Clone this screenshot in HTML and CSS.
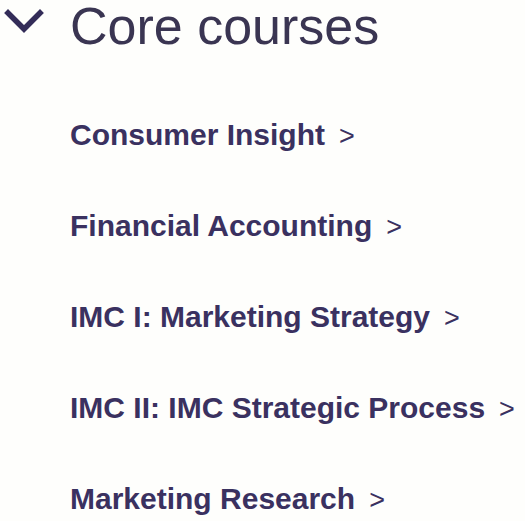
FILE: index.html
```html
<!DOCTYPE html>
<html>
<head>
<meta charset="utf-8">
<link rel="stylesheet" href="styles.css">
</head>
<body>
<div class="section">
  <div class="section-head">
    <svg class="toggle" width="48" height="40" viewBox="0 0 48 40">
      <path d="M8 13 L24 29 L40 13" fill="none" stroke="#332c58" stroke-width="5.5" stroke-linecap="square" stroke-linejoin="miter"/>
    </svg>
    <h2 class="title">Core courses</h2>
  </div>
  <ul class="courses">
    <li class="course-item"><a class="course">Consumer Insight<span class="arrow">&gt;</span></a></li>
    <li class="course-item"><a class="course">Financial Accounting<span class="arrow">&gt;</span></a></li>
    <li class="course-item"><a class="course">IMC I: Marketing Strategy<span class="arrow">&gt;</span></a></li>
    <li class="course-item"><a class="course">IMC II: IMC Strategic Process<span class="arrow">&gt;</span></a></li>
    <li class="course-item"><a class="course">Marketing Research<span class="arrow">&gt;</span></a></li>
  </ul>
</div>
</body>
</html>
```
FILE: styles.css
```css
html, body {
  margin: 0;
  padding: 0;
  background: #fefefc;
}
body {
  font-family: "Liberation Sans", Arial, sans-serif;
  color: #38305a;
}
.section-head {
  display: flex;
  align-items: flex-start;
  padding-top: 1px;
}
.toggle {
  flex: none;
  margin-top: -1px;
}
.title {
  margin: 0 0 0 22px;
  font-size: 52px;
  font-weight: 400;
  line-height: 50px;
  color: #3a3552;
}
.courses {
  list-style: none;
  margin: 66px 0 0 0;
  padding: 0 0 0 70px;
  display: flex;
  flex-direction: column;
  gap: 55px;
}
.course-item {
  font-size: 30px;
  line-height: 36px;
  height: 36px;
}
.course {
  font-weight: 700;
  color: #3a3160;
}
.arrow {
  font-weight: 400;
  font-size: 27px;
  margin-left: 14px;
}
```
